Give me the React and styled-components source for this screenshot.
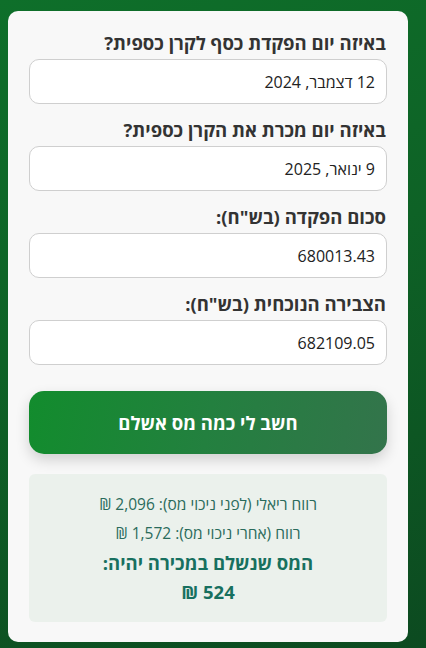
import React from 'react';
import styled, { createGlobalStyle } from 'styled-components';

const GlobalStyle = createGlobalStyle`
  html, body {
    margin: 0;
    padding: 0;
  }
  body {
    font-family: "Open Sans", "Noto Sans", sans-serif;
    background: linear-gradient(160deg, #0e6f2a 0%, #0e6226 45%, #0c4a20 100%);
    min-height: 648px;
  }
`;

const Page = styled.div`
  direction: rtl;
  padding: 11px 18px 9px 8px;
`;

const Card = styled.div`
  background: #f8f8f8;
  border-radius: 10px;
  padding: 20px 21px 20px;
  display: flex;
  flex-direction: column;
`;

const Field = styled.div`
  display: flex;
  flex-direction: column;
  margin-bottom: 14px;
`;

const Label = styled.label`
  font-size: 18.5px;
  font-weight: 700;
  color: #333;
  line-height: 24px;
  margin-bottom: 4px;
  padding-right: 1px;
`;

const Input = styled.div`
  height: 43px;
  border: 1px solid #cfcfcf;
  border-radius: 10px;
  background: #fff;
  display: flex;
  align-items: center;
  padding: 0 11px;
  font-size: 16px;
  color: #222;
`;

const Button = styled.button`
  margin-top: 12px;
  height: 63px;
  border: none;
  border-radius: 15px;
  background: linear-gradient(100deg, #128c2d 0%, #23803f 50%, #33744b 100%);
  color: #fff;
  font-family: inherit;
  font-size: 18.5px;
  font-weight: 700;
  box-shadow: 0 6px 14px rgba(0, 0, 0, 0.16);
  cursor: pointer;
`;

const Result = styled.div`
  margin-top: 20px;
  background: #ebf1ec;
  border-radius: 6px;
  padding: 16px 10px 16px;
  display: flex;
  flex-direction: column;
  align-items: center;
  color: #2a6b5b;
`;

const Line = styled.div`
  font-size: 15.5px;
  line-height: 29px;
`;

const Strong = styled.div`
  font-size: 18.5px;
  font-weight: 700;
  color: #17705f;
  line-height: 29px;
`;

const fields = [
  { label: 'באיזה יום הפקדת כסף לקרן כספית?', value: '12 דצמבר, 2024' },
  { label: 'באיזה יום מכרת את הקרן כספית?', value: '9 ינואר, 2025' },
  { label: 'סכום הפקדה (בש"ח):', value: '680013.43' },
  { label: 'הצבירה הנוכחית (בש"ח):', value: '682109.05' },
];

export default function App() {
  return (
    <>
      <GlobalStyle />
      <Page>
        <Card>
          {fields.map((f) => (
            <Field key={f.label}>
              <Label>{f.label}</Label>
              <Input>{f.value}</Input>
            </Field>
          ))}
          <Button>חשב לי כמה מס אשלם</Button>
          <Result>
            <Line>רווח ריאלי (לפני ניכוי מס): 2,096 ₪</Line>
            <Line>רווח (אחרי ניכוי מס): 1,572 ₪</Line>
            <Strong>המס שנשלם במכירה יהיה:</Strong>
            <Strong>524 ₪</Strong>
          </Result>
        </Card>
      </Page>
    </>
  );
}
